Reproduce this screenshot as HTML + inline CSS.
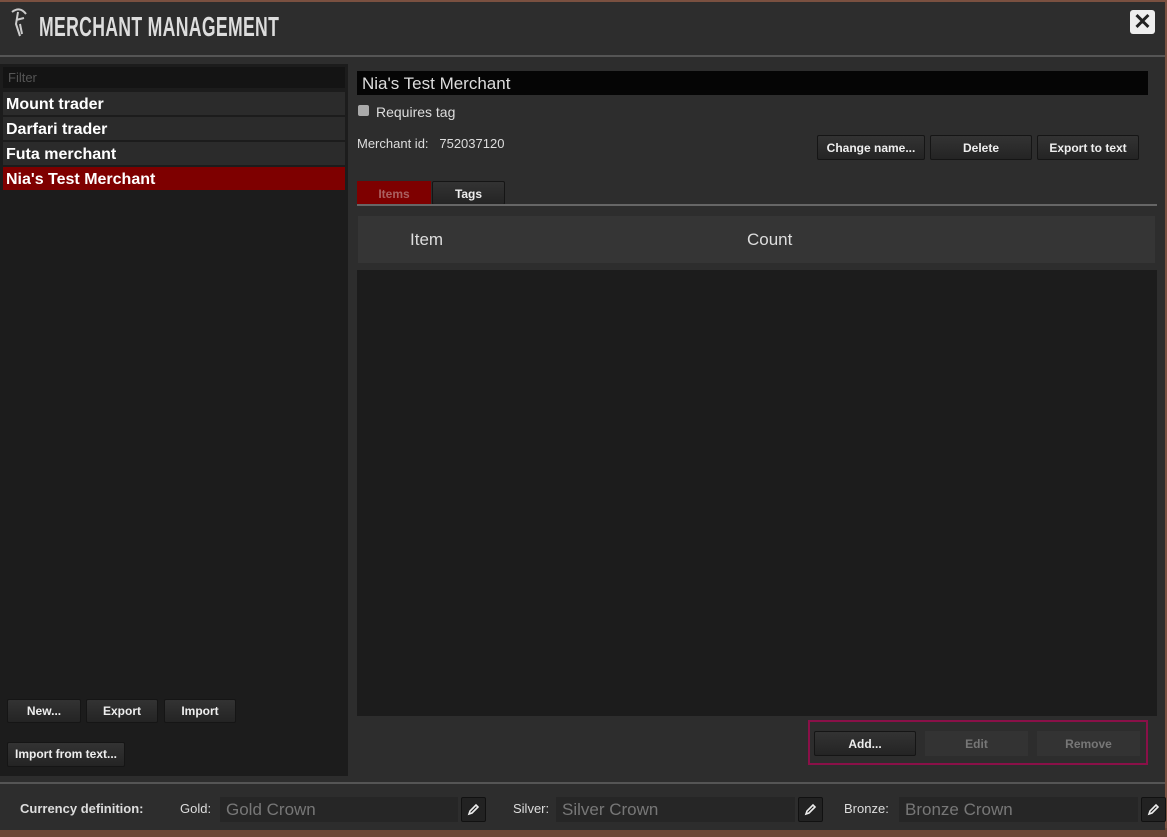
<!DOCTYPE html>
<html><head><style>
*{box-sizing:border-box;margin:0;padding:0}
body{width:1167px;height:837px;overflow:hidden;background:#7a5040;font-family:"Liberation Sans",sans-serif;position:relative}
.a{position:absolute}
.win{left:0;top:2px;width:1165px;height:828px;background:#2d2d2d}
.btn{position:absolute;background:linear-gradient(#333,#242424);border:1px solid #151515;color:#eee;font-weight:bold;font-size:12px;text-align:center;border-radius:2px}
.row{position:absolute;left:3px;width:342px;height:23px;background:#2b2b2b;color:#fff;font-weight:bold;font-size:16px;padding-left:3px;line-height:25px}
.inp{position:absolute;background:#262626;color:#777;font-size:17px;padding-left:6px;line-height:25px;height:25px}
.pen{position:absolute;width:25px;height:25px;background:#222;border:1px solid #111;border-radius:2px}
.lbl{position:absolute;color:#ddd;font-size:14px}
</style></head><body>
<div class="a" style="left:0;top:828px;width:1167px;height:9px;background:#6b4535"></div>
<div class="a win"></div>
<svg class="a" style="left:8px;top:6px" width="24" height="34" viewBox="0 0 24 34"><path d="M4 6 Q12 0 18 8 M10 6 L8 18 L12 30 M8 14 L16 12 M12 18 L14 28" stroke="#ccc" stroke-width="2" fill="none"/></svg>
<div class="a" style="left:39px;top:11px;color:#ddd;font-size:28px;font-weight:bold;letter-spacing:0.5px;transform:scaleX(0.63);transform-origin:left;white-space:nowrap">MERCHANT MANAGEMENT</div>
<div class="a" style="left:1130px;top:10px;width:25px;height:24px;background:#eee;border-radius:3px;color:#222;font-size:22px;font-weight:bold;text-align:center;line-height:24px">✕</div>
<div class="a" style="left:0;top:55px;width:1165px;height:2px;background:#555"></div>
<div class="a" style="left:0;top:64px;width:348px;height:712px;background:#1c1c1c"></div>
<div class="a" style="left:3px;top:67px;width:342px;height:21px;background:#141414;color:#555;font-size:13px;line-height:22px;padding-left:5px">Filter</div>
<div class="row" style="top:92px">Mount trader</div>
<div class="row" style="top:117px">Darfari trader</div>
<div class="row" style="top:142px">Futa merchant</div>
<div class="row" style="top:167px;background:#7e0000">Nia's Test Merchant</div>
<div class="btn" style="left:7px;top:699px;width:74px;height:24px;line-height:22px">New...</div>
<div class="btn" style="left:86px;top:699px;width:72px;height:24px;line-height:22px">Export</div>
<div class="btn" style="left:164px;top:699px;width:72px;height:24px;line-height:22px">Import</div>
<div class="btn" style="left:7px;top:742px;width:118px;height:25px;line-height:23px">Import from text...</div>
<div class="a" style="left:357px;top:71px;width:791px;height:24px;background:#050505;color:#ddd;font-size:17px;line-height:25px;padding-left:5px">Nia's Test Merchant</div>
<div class="a" style="left:358px;top:105px;width:11px;height:11px;background:#aaa;border-radius:2px"></div>
<div class="lbl" style="left:376px;top:104px">Requires tag</div>
<div class="lbl" style="left:357px;top:136px;font-size:13px">Merchant id:&nbsp;&nbsp; 752037120</div>
<div class="btn" style="left:817px;top:135px;width:108px;height:25px;line-height:24px">Change name...</div>
<div class="btn" style="left:930px;top:135px;width:102px;height:25px;line-height:24px">Delete</div>
<div class="btn" style="left:1037px;top:135px;width:102px;height:25px;line-height:24px">Export to text</div>
<div class="a" style="left:357px;top:181px;width:74px;height:24px;background:#7e0000;color:#aa6060;font-weight:bold;font-size:12px;text-align:center;line-height:27px">Items</div>
<div class="btn" style="left:432px;top:181px;width:73px;height:24px;line-height:25px">Tags</div>
<div class="a" style="left:357px;top:204px;width:800px;height:2px;background:#666"></div>
<div class="a" style="left:358px;top:216px;width:797px;height:47px;background:#353535"></div>
<div class="a" style="left:410px;top:230px;color:#ddd;font-size:17px">Item</div>
<div class="a" style="left:747px;top:230px;color:#ddd;font-size:17px">Count</div>
<div class="a" style="left:357px;top:270px;width:800px;height:446px;background:#1c1c1c"></div>
<div class="a" style="left:808px;top:720px;width:340px;height:45px;border:2px solid #8a1048"></div>
<div class="btn" style="left:814px;top:731px;width:102px;height:25px;line-height:24px">Add...</div>
<div class="a" style="left:925px;top:731px;width:103px;height:25px;background:#333;color:#777;font-weight:bold;font-size:12px;text-align:center;line-height:26px">Edit</div>
<div class="a" style="left:1037px;top:731px;width:103px;height:25px;background:#333;color:#777;font-weight:bold;font-size:12px;text-align:center;line-height:26px">Remove</div>
<div class="a" style="left:0;top:782px;width:1165px;height:2px;background:#555"></div>
<div class="lbl" style="left:20px;top:801px;font-weight:bold;font-size:13px">Currency definition:</div>
<div class="lbl" style="left:180px;top:801px;font-size:13px">Gold:</div>
<div class="inp" style="left:220px;top:797px;width:238px">Gold Crown</div>
<div class="pen" style="left:461px;top:797px"></div>
<div class="lbl" style="left:513px;top:801px;font-size:13px">Silver:</div>
<div class="inp" style="left:556px;top:797px;width:239px">Silver Crown</div>
<div class="pen" style="left:798px;top:797px"></div>
<div class="lbl" style="left:844px;top:801px;font-size:13px">Bronze:</div>
<div class="inp" style="left:899px;top:797px;width:239px">Bronze Crown</div>
<div class="pen" style="left:1141px;top:797px"></div>
<svg class="a" style="left:466px;top:802px" width="15" height="15"><path d="M3 12 L4 9 L10 3 L12 5 L6 11 Z" stroke="#eee" stroke-width="1.6" fill="none"/></svg>
<svg class="a" style="left:803px;top:802px" width="15" height="15"><path d="M3 12 L4 9 L10 3 L12 5 L6 11 Z" stroke="#eee" stroke-width="1.6" fill="none"/></svg>
<svg class="a" style="left:1146px;top:802px" width="15" height="15"><path d="M3 12 L4 9 L10 3 L12 5 L6 11 Z" stroke="#eee" stroke-width="1.6" fill="none"/></svg>
</body></html>
